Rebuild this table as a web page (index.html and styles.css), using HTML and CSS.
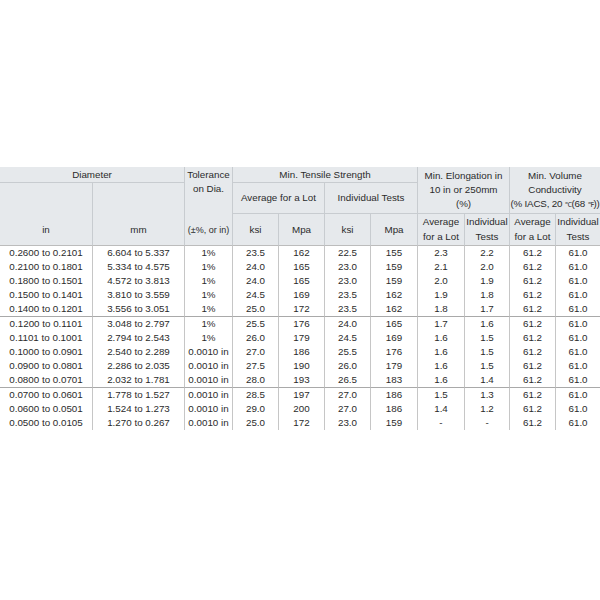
FILE: index.html
```html
<!DOCTYPE html>
<html>
<head>
<meta charset="utf-8">
<link rel="stylesheet" href="styles.css">
</head>
<body>
<div class="page">
<table class="spec">
<colgroup>
<col style="width:92px"><col style="width:92px"><col style="width:48px"><col style="width:46px"><col style="width:46px"><col style="width:46px"><col style="width:47px"><col style="width:47px"><col style="width:45px"><col style="width:46px"><col style="width:45px">
</colgroup>
<thead>
<tr class="h1">
<th colspan="2" class="first bb">Diameter</th>
<th class="tol-top">Tolerance</th>
<th colspan="4" class="bb">Min. Tensile Strength</th>
<th colspan="2" rowspan="2" class="multi bb">Min. Elongation in<br>10 in or 250mm<br>(%)</th>
<th colspan="2" rowspan="2" class="multi bb">Min. Volume<br>Conductivity<br><span class="tight">(% IACS, 20 <span class="deg">℃</span>(68 <span class="deg">℉</span>))</span></th>
</tr>
<tr class="h2">
<th rowspan="2" class="first low bb3">in</th>
<th rowspan="2" class="low bb3">mm</th>
<th class="tol-mid">on Dia.</th>
<th colspan="2" class="bb">Average for a Lot</th>
<th colspan="2" class="bb">Individual Tests</th>
</tr>
<tr class="h3">
<th class="bb3 small">(±%, or in)</th>
<th class="bb3">ksi</th>
<th class="bb3">Mpa</th>
<th class="bb3">ksi</th>
<th class="bb3">Mpa</th>
<th class="bb3 two">Average<br>for a Lot</th>
<th class="bb3 two">Individual<br>Tests</th>
<th class="bb3 two">Average<br>for a Lot</th>
<th class="bb3 two">Individual<br>Tests</th>
</tr>
</thead>
<tbody>
<tr><td class="first">0.2600 to 0.2101</td><td>6.604 to 5.337</td><td>1%</td><td>23.5</td><td>162</td><td>22.5</td><td>155</td><td>2.3</td><td>2.2</td><td>61.2</td><td>61.0</td></tr>
<tr><td class="first">0.2100 to 0.1801</td><td>5.334 to 4.575</td><td>1%</td><td>24.0</td><td>165</td><td>23.0</td><td>159</td><td>2.1</td><td>2.0</td><td>61.2</td><td>61.0</td></tr>
<tr><td class="first">0.1800 to 0.1501</td><td>4.572 to 3.813</td><td>1%</td><td>24.0</td><td>165</td><td>23.0</td><td>159</td><td>2.0</td><td>1.9</td><td>61.2</td><td>61.0</td></tr>
<tr><td class="first">0.1500 to 0.1401</td><td>3.810 to 3.559</td><td>1%</td><td>24.5</td><td>169</td><td>23.5</td><td>162</td><td>1.9</td><td>1.8</td><td>61.2</td><td>61.0</td></tr>
<tr class="sep"><td class="first">0.1400 to 0.1201</td><td>3.556 to 3.051</td><td>1%</td><td>25.0</td><td>172</td><td>23.5</td><td>162</td><td>1.8</td><td>1.7</td><td>61.2</td><td>61.0</td></tr>
<tr><td class="first">0.1200 to 0.1101</td><td>3.048 to 2.797</td><td>1%</td><td>25.5</td><td>176</td><td>24.0</td><td>165</td><td>1.7</td><td>1.6</td><td>61.2</td><td>61.0</td></tr>
<tr><td class="first">0.1101 to 0.1001</td><td>2.794 to 2.543</td><td>1%</td><td>26.0</td><td>179</td><td>24.5</td><td>169</td><td>1.6</td><td>1.5</td><td>61.2</td><td>61.0</td></tr>
<tr><td class="first">0.1000 to 0.0901</td><td>2.540 to 2.289</td><td>0.0010 in</td><td>27.0</td><td>186</td><td>25.5</td><td>176</td><td>1.6</td><td>1.5</td><td>61.2</td><td>61.0</td></tr>
<tr><td class="first">0.0900 to 0.0801</td><td>2.286 to 2.035</td><td>0.0010 in</td><td>27.5</td><td>190</td><td>26.0</td><td>179</td><td>1.6</td><td>1.5</td><td>61.2</td><td>61.0</td></tr>
<tr class="sep"><td class="first">0.0800 to 0.0701</td><td>2.032 to 1.781</td><td>0.0010 in</td><td>28.0</td><td>193</td><td>26.5</td><td>183</td><td>1.6</td><td>1.4</td><td>61.2</td><td>61.0</td></tr>
<tr><td class="first">0.0700 to 0.0601</td><td>1.778 to 1.527</td><td>0.0010 in</td><td>28.5</td><td>197</td><td>27.0</td><td>186</td><td>1.5</td><td>1.3</td><td>61.2</td><td>61.0</td></tr>
<tr><td class="first">0.0600 to 0.0501</td><td>1.524 to 1.273</td><td>0.0010 in</td><td>29.0</td><td>200</td><td>27.0</td><td>186</td><td>1.4</td><td>1.2</td><td>61.2</td><td>61.0</td></tr>
<tr><td class="first">0.0500 to 0.0105</td><td>1.270 to 0.267</td><td>0.0010 in</td><td>25.0</td><td>172</td><td>23.0</td><td>159</td><td>-</td><td>-</td><td>61.2</td><td>61.0</td></tr>
</tbody>
</table>
</div>
</body>
</html>
```
FILE: styles.css
```css
html, body {
  margin: 0;
  padding: 0;
  background: #ffffff;
}
.page {
  padding-top: 167px;
}
.spec {
  width: 600px;
  table-layout: fixed;
  border-collapse: separate;
  border-spacing: 0;
  font-family: "Liberation Sans", Arial, sans-serif;
  font-size: 9.8px;
  color: #2b2b2b;
}
.spec th, .spec td {
  padding: 0;
  text-align: center;
  vertical-align: middle;
  font-weight: normal;
  white-space: nowrap;
  border-left: 1px solid #c6c6c6;
  line-height: 14px;
}
.spec th.first, .spec td.first {
  border-left: none;
}
.spec thead th {
  background: #e6e9ec;
  border-left-color: #c8ccd0;
}
.spec tr.h1 { height: 16px; }
.spec tr.h2 { height: 31px; }
.spec tr.h3 { height: 32px; }
.spec th.bb {
  border-bottom: 1px solid #c8ccd0;
}
.spec th.bb3 {
  border-bottom: 1px solid #bcbcbc;
}
.spec th.multi {
  line-height: 14px;
}
.spec th.tol-top {
  vertical-align: middle;
}
.spec th.tol-mid {
  vertical-align: top;
  line-height: 12px;
}
.spec th.low {
  vertical-align: bottom;
  padding-bottom: 8px;
}
.spec th.small {
  font-size: 9px;
}
.spec th.two {
  line-height: 14.5px;
}
.tight {
  letter-spacing: -0.2px;
}
.deg {
  font-size: 7px;
}
.spec tbody tr {
  height: 14px;
}
.spec tbody td {
  height: 14px;
  line-height: 14px;
}
.spec tbody tr.sep td {
  border-bottom: 1px solid #a9a9a9;
}
```
